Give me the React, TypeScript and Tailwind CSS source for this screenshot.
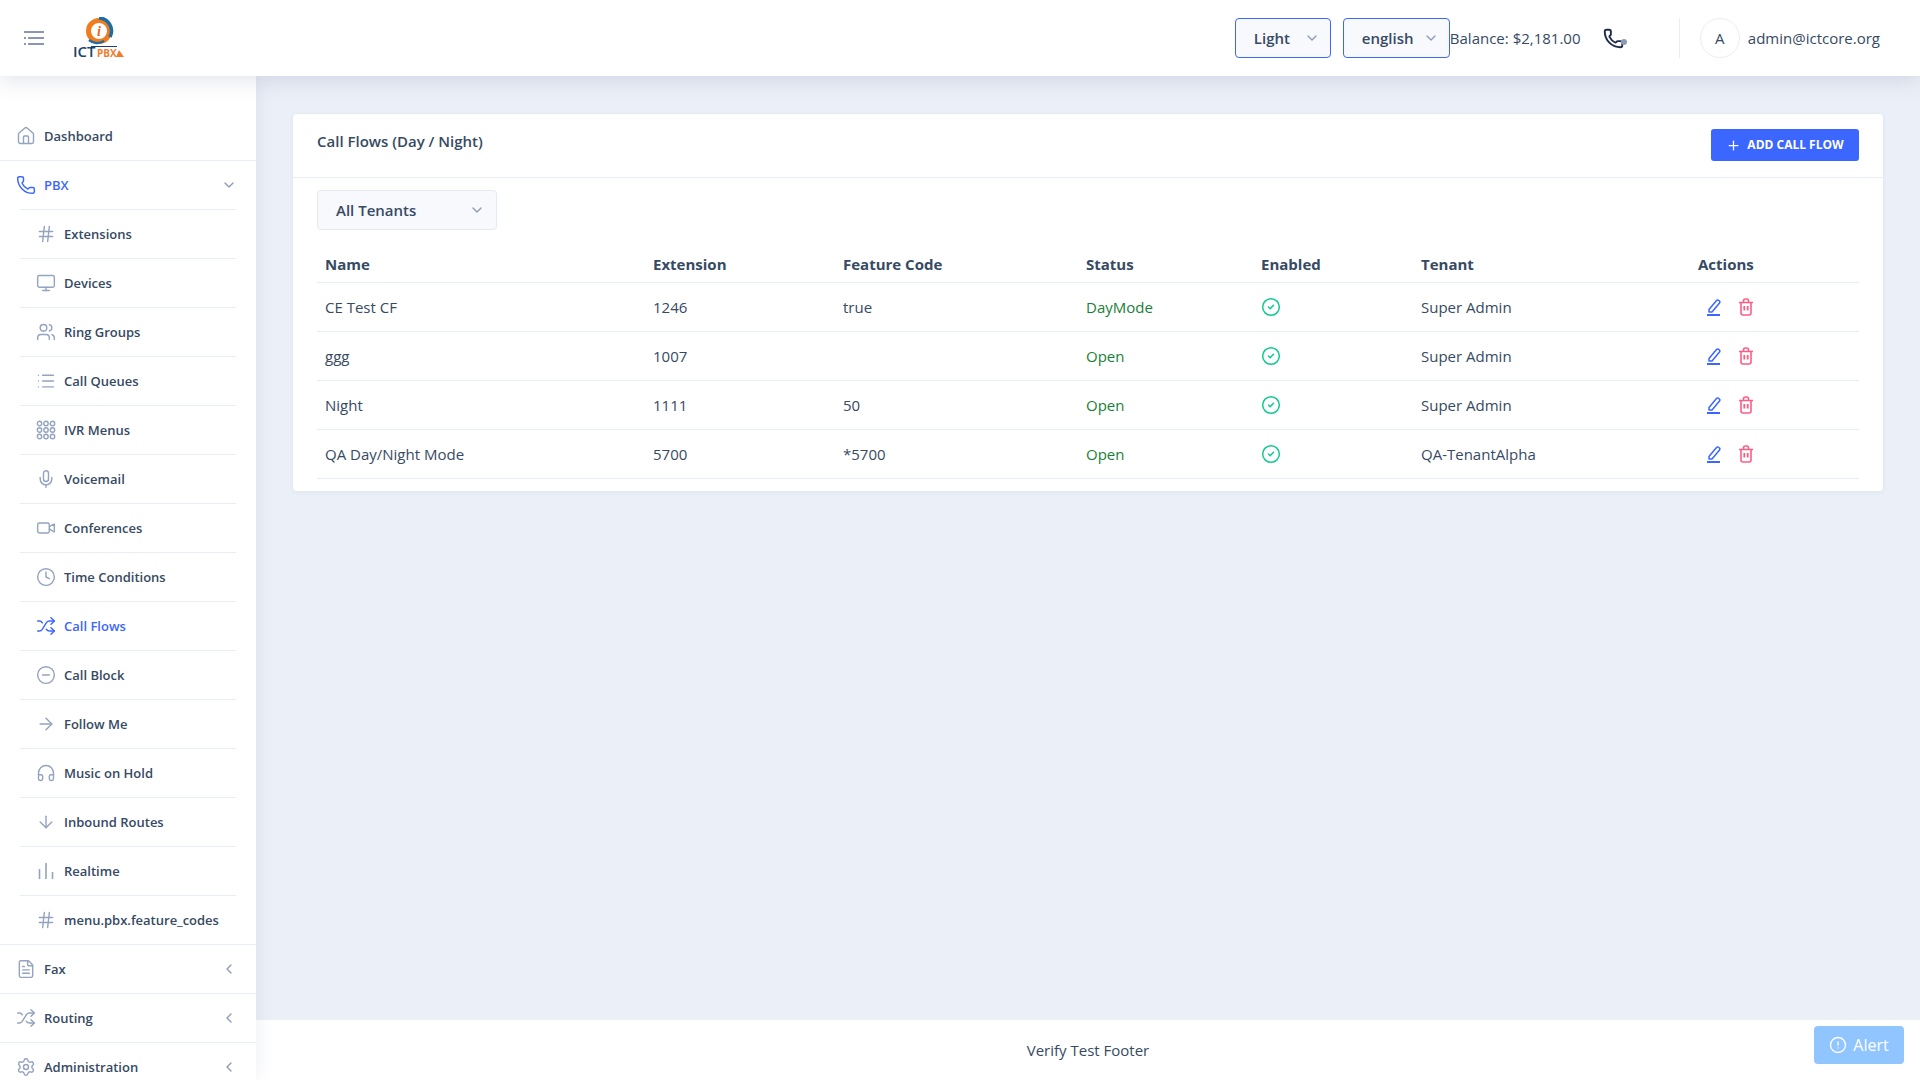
import { ChevronDown, ChevronLeft, Plus, Phone, House, Hash, Monitor, Users, List, Mic, Video, Clock, Shuffle, CircleMinus, ArrowRight, ArrowDown, Headphones, FileText, Settings, CircleCheck, CircleAlert } from 'lucide-react';

const GridDots = ({ className }: { className?: string }) => (
  <svg className={className} viewBox="0 0 20 20" fill="none" stroke="currentColor" strokeWidth="1.4">
    {[3.5, 10, 16.5].map((y) =>
      [3.5, 10, 16.5].map((x) => <circle key={`${x}-${y}`} cx={x} cy={y} r="2.2" />)
    )}
  </svg>
);

const Bars = ({ className }: { className?: string }) => (
  <svg className={className} viewBox="0 0 20 20" fill="none" stroke="currentColor" strokeWidth="1.6">
    <path d="M3.5 8v10M10 2v16M16.5 11v7" />
  </svg>
);

const MenuIcon = () => (
  <svg width="22" height="16" viewBox="0 0 22 16" fill="none" stroke="#8a96b2" strokeWidth="2">
    <path d="M1 2h20M1 8h2M5 8h16M1 14h2M5 14h16" />
  </svg>
);

const EditIcon = () => (
  <svg width="16" height="18" viewBox="0 0 16 18" fill="none" stroke="#3b66ff" strokeWidth="1.5">
    <path d="M3 11.5 10.5 2.5a1.5 1.5 0 0 1 2.2-.2l.6.5a1.5 1.5 0 0 1 .2 2.2L6 14H3z" strokeLinejoin="round" />
    <path d="M1 17h13" strokeWidth="2" />
  </svg>
);

const TrashIcon = () => (
  <svg width="16" height="18" viewBox="0 0 16 18" fill="none" stroke="#ff5c85" strokeWidth="1.6">
    <path d="M1 4.5h14M3 4.5V15a2 2 0 0 0 2 2h6a2 2 0 0 0 2-2V4.5M5.5 4.5V3a2 2 0 0 1 2-2h1a2 2 0 0 1 2 2v1.5" />
    <path d="M6.3 8v4.5M9.7 8v4.5" strokeWidth="1.8" />
  </svg>
);

const Logo = () => (
  <svg className="mt-[4px]" width="56" height="46" viewBox="0 0 56 46">
    <circle cx="26" cy="14" r="10.5" fill="none" stroke="#f07c1e" strokeWidth="5" />
    <path d="M26 1a13 13 0 0 1 11 19" fill="none" stroke="#1c6ea4" strokeWidth="3.5" />
    <path d="M16 23a13 13 0 0 0 15 1" fill="none" stroke="#1c6ea4" strokeWidth="2.5" />
    <text x="26" y="19" textAnchor="middle" fontFamily="Liberation Serif" fontStyle="italic" fontWeight="700" fontSize="14" fill="#e8641b">i</text>
    <text x="0" y="40" fontFamily="Open Sans" fontWeight="600" fontSize="15" fill="#17456e">ICT</text>
    <text x="24" y="40" fontFamily="Open Sans" fontWeight="700" fontSize="10" fill="#ef7d2c">PBX</text>
    <path d="M18 29.5h26" stroke="#17456e" strokeWidth="1" />
    <path d="M43 40l3-7 5 7z" fill="#ef7d2c" />
  </svg>
);

const subItems = [
  { label: 'Extensions', icon: Hash },
  { label: 'Devices', icon: Monitor },
  { label: 'Ring Groups', icon: Users },
  { label: 'Call Queues', icon: List },
  { label: 'IVR Menus', icon: GridDots },
  { label: 'Voicemail', icon: Mic },
  { label: 'Conferences', icon: Video },
  { label: 'Time Conditions', icon: Clock },
  { label: 'Call Flows', icon: Shuffle, active: true },
  { label: 'Call Block', icon: CircleMinus },
  { label: 'Follow Me', icon: ArrowRight },
  { label: 'Music on Hold', icon: Headphones },
  { label: 'Inbound Routes', icon: ArrowDown },
  { label: 'Realtime', icon: Bars },
  { label: 'menu.pbx.feature_codes', icon: Hash },
];

const rows = [
  { name: 'CE Test CF', ext: '1246', code: 'true', status: 'DayMode', tenant: 'Super Admin' },
  { name: 'ggg', ext: '1007', code: '', status: 'Open', tenant: 'Super Admin' },
  { name: 'Night', ext: '1111', code: '50', status: 'Open', tenant: 'Super Admin' },
  { name: 'QA Day/Night Mode', ext: '5700', code: '*5700', status: 'Open', tenant: 'QA-TenantAlpha' },
];

const Sidebar = () => (
  <aside className="relative z-[5] w-[256px] shrink-0 overflow-hidden bg-white pt-[36px] text-[13px] font-semibold text-[#364a63] shadow-[0_0_18px_rgba(70,90,130,0.10)]">
    <div className="flex h-[49px] items-center border-b border-[#e9edf5] pl-[16px]">
      <House className="h-[20px] w-[20px] text-[#94a3bf]" strokeWidth={1.7} />
      <span className="ml-[8px] pt-[1px]">Dashboard</span>
    </div>
    <div className="flex h-[48px] items-center pl-[16px] pr-[19px] text-[#3b66ff]">
      <Phone className="h-[20px] w-[20px]" strokeWidth={1.8} />
      <span className="ml-[8px] flex-1 pt-[1px]">PBX</span>
      <ChevronDown className="h-[16px] w-[16px] text-[#8e9ab5]" strokeWidth={2} />
    </div>
    <div className="border-b border-[#e9edf5]">
      {subItems.map((item) => (
        <div key={item.label} className="mx-[20px] flex h-[49px] items-center border-t border-[#e9edf5] pl-[16px]">
          <item.icon className={`h-[20px] w-[20px] ${item.active ? 'text-[#3b66ff]' : 'text-[#94a3bf]'}`} strokeWidth={1.7} />
          <span className={`ml-[8px] pt-[1px] ${item.active ? 'text-[#3b66ff]' : ''}`}>{item.label}</span>
        </div>
      ))}
    </div>
    {[
      { label: 'Fax', icon: FileText },
      { label: 'Routing', icon: Shuffle },
      { label: 'Administration', icon: Settings },
    ].map((item) => (
      <div key={item.label} className="flex h-[49px] items-center border-b border-[#e9edf5] pl-[16px] pr-[19px]">
        <item.icon className="h-[20px] w-[20px] text-[#94a3bf]" strokeWidth={1.7} />
        <span className="ml-[8px] flex-1 pt-[1px]">{item.label}</span>
        <ChevronLeft className="h-[16px] w-[16px] text-[#8e9ab5]" strokeWidth={2} />
      </div>
    ))}
  </aside>
);

const App = () => {
  return (
    <div className="relative flex h-screen flex-col overflow-hidden bg-[#ebeff7] font-['Open_Sans',sans-serif] text-[#364a63]">
      <header className="relative z-10 flex h-[76px] shrink-0 items-center bg-white pr-[40px] shadow-[0_4px_20px_rgba(70,90,130,0.16)]">
        <div className="ml-[23px]"><MenuIcon /></div>
        <div className="ml-[28px]"><Logo /></div>
        <div className="ml-auto flex items-center">
          <div className="flex h-[40px] w-[96px] items-center justify-between rounded-[4px] border border-[#3b66ff] bg-[#f7f9fd] pl-[18px] pr-[10px] text-[15px] font-semibold">
            Light
            <ChevronDown className="h-[16px] w-[16px] text-[#8e9ab5]" strokeWidth={2} />
          </div>
          <div className="ml-[12px] flex h-[40px] w-[107px] items-center justify-between rounded-[4px] border border-[#3b66ff] bg-[#f7f9fd] pl-[18px] pr-[10px] text-[15px] font-semibold">
            english
            <ChevronDown className="h-[16px] w-[16px] text-[#8e9ab5]" strokeWidth={2} />
          </div>
          <span className="w-[130px] whitespace-nowrap text-[15px]">Balance: $2,181.00</span>
          <div className="relative ml-[23px] w-[24px]">
            <Phone className="h-[21px] w-[21px] text-[#1f2d4d]" strokeWidth={2.2} />
            <span className="absolute right-0 top-[11px] h-[6px] w-[6px] rounded-full bg-[#8e9ab5]" />
          </div>
          <div className="ml-[52px] h-[40px] w-px bg-[#e9edf5]" />
          <div className="ml-[20px] flex h-[40px] w-[40px] items-center justify-center rounded-full border border-[#e9edf5] text-[15px]">A</div>
          <span className="ml-[8px] text-[15px]">admin@ictcore.org</span>
        </div>
      </header>

      <div className="flex min-h-0 flex-1">
        <Sidebar />
        <div className="flex min-w-0 flex-1 flex-col">
          <main className="min-h-0 flex-1 px-[36px] pt-[37px]">
            <section className="rounded-[4px] border border-[#e5e9f2] bg-white pb-[12px] shadow-[0_1px_3px_rgba(70,90,130,0.06)]">
              <div className="flex h-[64px] items-start justify-between border-b border-[#e9edf5] px-[24px]">
                <h1 className="mt-[16px] text-[15px] font-semibold">Call Flows (Day / Night)</h1>
                <button className="mt-[15px] flex h-[32px] w-[148px] items-center justify-center rounded-[3px] bg-[#3b66ff] text-[12px] font-bold text-white">
                  <Plus className="mr-[6px] h-[15px] w-[15px]" strokeWidth={2} />
                  ADD CALL FLOW
                </button>
              </div>
              <div className="px-[24px]">
                <div className="mt-[12px] flex h-[40px] w-[180px] items-center justify-between rounded-[4px] border border-[#e5e9f2] bg-[#f7f9fd] pl-[18px] pr-[11px] text-[15px] font-semibold">
                  All Tenants
                  <ChevronDown className="h-[16px] w-[16px] text-[#8e9ab5]" strokeWidth={2} />
                </div>
                <table className="w-full table-fixed text-left text-[15px]">
                  <thead>
                    <tr className="h-[52px] border-b border-[#e9edf5] align-bottom">
                      <th className="w-[328px] pb-[6px] pl-[8px] font-bold">Name</th>
                      <th className="w-[190px] pb-[6px] pl-[8px] font-bold">Extension</th>
                      <th className="w-[243px] pb-[6px] pl-[8px] font-bold">Feature Code</th>
                      <th className="w-[175px] pb-[6px] pl-[8px] font-bold">Status</th>
                      <th className="w-[160px] pb-[6px] pl-[8px] font-bold">Enabled</th>
                      <th className="w-[277px] pb-[6px] pl-[8px] font-bold">Tenant</th>
                      <th className="pb-[6px] pl-[8px] font-bold">Actions</th>
                    </tr>
                  </thead>
                  <tbody>
                    {rows.map((row) => (
                      <tr key={row.name} className="h-[49px] border-b border-[#e9edf5]">
                        <td className="pl-[8px] pt-[1px]">{row.name}</td>
                        <td className="pl-[8px] pt-[1px]">{row.ext}</td>
                        <td className="pl-[8px] pt-[1px]">{row.code}</td>
                        <td className="pl-[8px] pt-[1px] text-[#1a7f37]">{row.status}</td>
                        <td className="pl-[8px]">
                          <CircleCheck className="h-[20px] w-[20px] text-[#10c98f]" strokeWidth={1.8} />
                        </td>
                        <td className="pl-[8px] pt-[1px]">{row.tenant}</td>
                        <td className="pl-[8px]">
                          <div className="flex items-center gap-[16px] pl-[8px]">
                            <EditIcon />
                            <TrashIcon />
                          </div>
                        </td>
                      </tr>
                    ))}
                  </tbody>
                </table>
              </div>
            </section>
          </main>
          <footer className="flex h-[60px] shrink-0 items-center justify-center bg-white text-[15px]">
            Verify Test Footer
          </footer>
        </div>
      </div>

      <div className="absolute bottom-[16px] right-[16px] z-20 flex h-[38px] w-[90px] items-center justify-center rounded-[4px] bg-[#90c5ff] text-[16px] text-white">
        <CircleAlert className="mr-[6px] h-[18px] w-[18px]" strokeWidth={1.8} />
        Alert
      </div>
    </div>
  );
};

export default App;
